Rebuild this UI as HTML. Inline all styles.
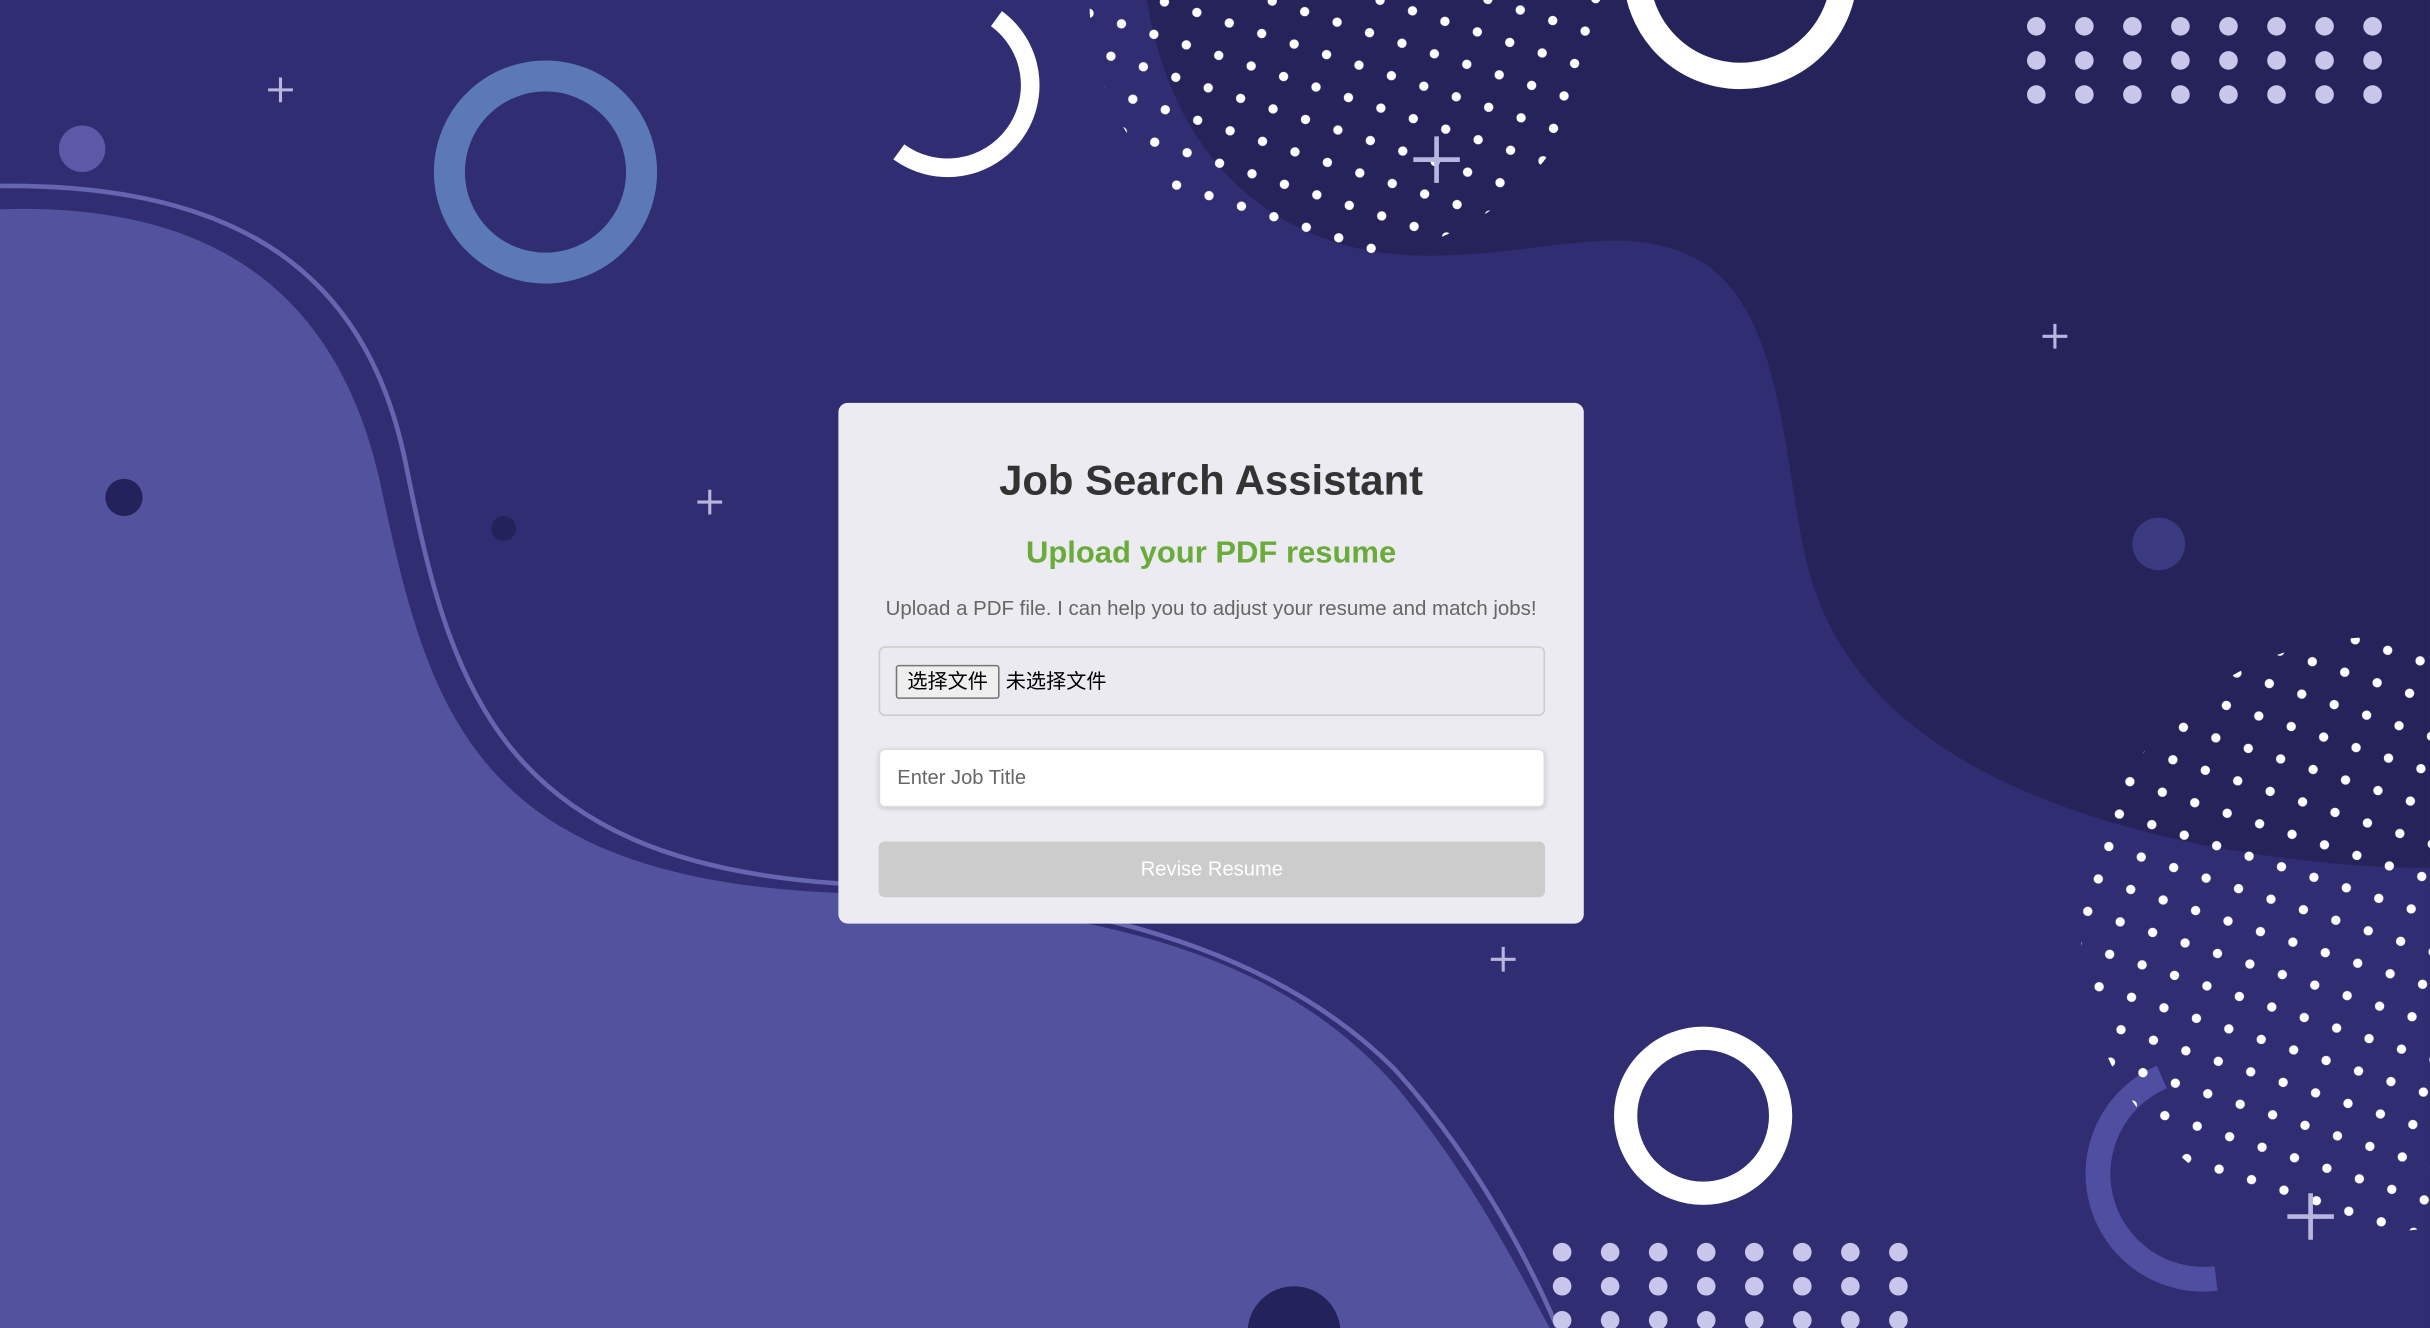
<!DOCTYPE html>
<html><head><meta charset="utf-8"><style>
html,body{margin:0;padding:0;overflow:hidden;background:#312d72}
#wrap{position:absolute;left:0;top:0;width:1568px;height:857px;transform:scale(1.5497);transform-origin:0 0;font-family:"Liberation Sans","Noto Sans CJK SC",sans-serif}
svg{position:absolute;left:0;top:0}
.card{position:absolute;left:541px;top:260px;width:481px;height:336px;background:#ebebf1;border-radius:6px}
h1{position:absolute;left:0;right:0;top:295px;margin:0;text-align:center;font-size:27px;font-weight:bold;color:#333;padding-left:0}
.a{position:absolute;text-align:center}
</style></head><body><div id="wrap">
<svg width="1568" height="857" viewBox="0 0 1568 857">
<defs>
<pattern id="dp" width="22" height="22" patternUnits="userSpaceOnUse" patternTransform="rotate(18)"><circle cx="11" cy="11" r="3" fill="#fff"/></pattern>
<clipPath id="c1"><circle cx="868" cy="0" r="165"/></clipPath>
<clipPath id="c2"><circle cx="1535" cy="603" r="192"/></clipPath>
</defs>
<rect width="1568" height="857" fill="#312d72"/>
<path d="M740 0 C760 120 840 165 920 165 C1000 165 1050 140 1100 170 C1150 205 1150 290 1165 360 C1190 470 1300 520 1420 545 C1500 560 1550 560 1568 560 L1568 0 Z" fill="#26235b"/>
<path d="M0 135 C150 130 220 200 245 310 C275 450 300 560 520 575 C700 585 820 610 900 700 C950 760 980 820 1000 857 L0 857 Z" fill="#53529e"/>
<path d="M0 120 C170 118 240 190 262 300 C290 440 320 555 540 570 C720 580 830 620 900 690 C950 745 985 810 1005 857" fill="none" stroke="#6565b0" stroke-width="3"/>
<circle cx="352" cy="111" r="62" fill="none" stroke="#5b79b7" stroke-width="20"/>
<circle cx="53" cy="96" r="15" fill="#5b59a8"/>
<circle cx="80" cy="321" r="12" fill="#24225a"/>
<circle cx="325" cy="341" r="8" fill="#24225a"/>
<circle cx="1393" cy="351" r="17" fill="#3b397f"/>
<circle cx="835" cy="860" r="30" fill="#24225a"/>
<path d="M643 12 A52 52 0 0 1 580 98" fill="none" stroke="#fff" stroke-width="12"/>
<circle cx="1123" cy="-18" r="67" fill="none" stroke="#fff" stroke-width="17"/>
<circle cx="1099" cy="720" r="50" fill="none" stroke="#fff" stroke-width="15"/>
<path d="M1430 825 A68 68 0 0 1 1395 695" fill="none" stroke="#4f4ea0" stroke-width="16"/>
<rect x="690" y="-10" width="360" height="190" fill="url(#dp)" clip-path="url(#c1)"/>
<rect x="1330" y="400" width="250" height="410" fill="url(#dp)" clip-path="url(#c2)"/>
<g fill="#c8c6ea">
<g id="gr"><circle cx="1314" cy="17" r="6"/><circle cx="1345" cy="17" r="6"/><circle cx="1376" cy="17" r="6"/><circle cx="1407" cy="17" r="6"/><circle cx="1438" cy="17" r="6"/><circle cx="1469" cy="17" r="6"/><circle cx="1500" cy="17" r="6"/><circle cx="1531" cy="17" r="6"/></g>
<use href="#gr" y="22"/><use href="#gr" y="44"/>
<use href="#gr" x="-306" y="791"/><use href="#gr" x="-306" y="813"/><use href="#gr" x="-306" y="835"/>
</g>
<g stroke="#b8b6e0" stroke-width="2">
<path d="M173 58h16M181 50v16"/><path d="M450 324h16M458 316v16"/><path d="M1318 217h16M1326 209v16"/><path d="M962 619h16M970 611v16"/>
<path d="M912 103h30M927 88v30" stroke-width="3"/><path d="M1476 785h30M1491 770v30" stroke-width="3"/>
</g>
</svg>
<div class="card"></div>
<h1 style="left:541px;width:481px">Job Search Assistant</h1>
<div class="a" style="left:541px;width:481px;top:346px;font-size:20px;font-weight:bold;color:#6aab3b">Upload your PDF resume</div>
<div class="a" style="left:541px;width:481px;top:385px;font-size:13.2px;color:#666">Upload a PDF file. I can help you to adjust your resume and match jobs!</div>
<div style="position:absolute;left:567px;top:417px;width:428px;height:43px;border:1px solid #ccc;border-radius:4px;background:#eaeaf0"></div>
<div style="position:absolute;left:578px;top:429px;width:65px;height:20px;border:1px solid #767676;border-radius:2px;background:#efefef;font-size:13px;line-height:20px;text-align:center;color:#000">选择文件</div>
<div style="position:absolute;left:649px;top:430px;font-size:13px;line-height:20px;color:#000">未选择文件</div>
<div style="position:absolute;left:567px;top:483px;height:36px;border:1px solid #ddd;border-radius:4px;background:#fff;box-shadow:0 1px 3px rgba(0,0,0,.15);font-size:13px;line-height:36px;color:#666;padding-left:11px;width:417px">Enter Job Title</div>
<div style="position:absolute;left:567px;top:543px;width:430px;height:36px;border-radius:4px;background:#cccccc;font-size:13px;line-height:36px;text-align:center;color:#fff">Revise Resume</div>
</div></body></html>
